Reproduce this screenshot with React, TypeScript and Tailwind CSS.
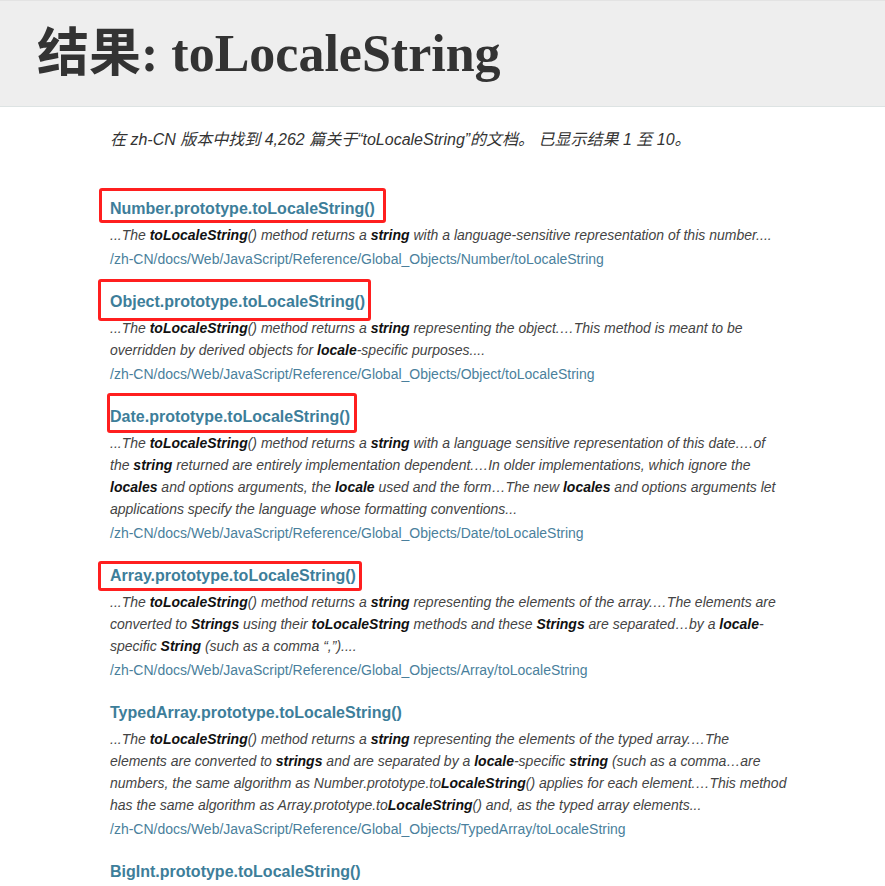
import React, { ReactElement } from "react";

type Result = {
  title: string;
  excerpt: string;
  url: string;
  box?: { left: number; top: number; width: number; height: number };
};

const RESULTS: Result[] = [
  {
    title: "Number.prototype.toLocaleString()",
    excerpt:
      "...The **toLocaleString**() method returns a **string** with a language-sensitive representation of this number....",
    url: "/zh-CN/docs/Web/JavaScript/Reference/Global_Objects/Number/toLocaleString",
    box: { left: -11, top: -9, width: 287, height: 35 },
  },
  {
    title: "Object.prototype.toLocaleString()",
    excerpt:
      "...The **toLocaleString**() method returns a **string** representing the object.\u2026This method is meant to be overridden by derived objects for **locale**-specific purposes....",
    url: "/zh-CN/docs/Web/JavaScript/Reference/Global_Objects/Object/toLocaleString",
    box: { left: -12, top: -11, width: 273, height: 42 },
  },
  {
    title: "Date.prototype.toLocaleString()",
    excerpt:
      "...The **toLocaleString**() method returns a **string** with a language sensitive representation of this date.\u2026of the **string** returned are entirely implementation dependent.\u2026In older implementations, which ignore the **locales** and options arguments, the **locale** used and the form\u2026The new **locales** and options arguments let applications specify the language whose formatting conventions...",
    url: "/zh-CN/docs/Web/JavaScript/Reference/Global_Objects/Date/toLocaleString",
    box: { left: -3, top: -12, width: 250, height: 40 },
  },
  {
    title: "Array.prototype.toLocaleString()",
    excerpt:
      "...The **toLocaleString**() method returns a **string** representing the elements of the array.\u2026The elements are converted to **Strings** using their **toLocaleString** methods and these **Strings** are separated\u2026by a **locale**-specific **String** (such as a comma \u201c,\u201d)....",
    url: "/zh-CN/docs/Web/JavaScript/Reference/Global_Objects/Array/toLocaleString",
    box: { left: -12, top: -3, width: 264, height: 30 },
  },
  {
    title: "TypedArray.prototype.toLocaleString()",
    excerpt:
      "...The **toLocaleString**() method returns a **string** representing the elements of the typed array.\u2026The elements are converted to **strings** and are separated by a **locale**-specific **string** (such as a comma\u2026are numbers, the same algorithm as Number.prototype.to**LocaleString**() applies for each element.\u2026This method has the same algorithm as Array.prototype.to**LocaleString**() and, as the typed array elements...",
    url: "/zh-CN/docs/Web/JavaScript/Reference/Global_Objects/TypedArray/toLocaleString",
  },
  {
    title: "BigInt.prototype.toLocaleString()",
    excerpt: "",
    url: "",
  },
];

function Excerpt({ text }: { text: string }): ReactElement {
  const parts = text.split("**");
  return (
    <p className="mt-[3px] text-[14px] leading-[22px] italic text-[#444]">
      {parts.map((p, i) =>
        i % 2 === 1 ? (
          <b key={i} className="font-bold text-[#111]">
            {p}
          </b>
        ) : (
          <React.Fragment key={i}>{p}</React.Fragment>
        )
      )}
    </p>
  );
}

function ResultItem({ result }: { result: Result }): ReactElement {
  return (
    <li className="mb-[20px]">
      <a href="#" className="relative inline-block text-[16px] leading-[24px] font-bold text-[#3d7e9a]">
        {result.title}
        {result.box ? (
          <span
            className="pointer-events-none absolute rounded-[3px] border-[3px] border-[#ff1f1f]"
            style={{
              left: result.box.left,
              top: result.box.top,
              width: result.box.width,
              height: result.box.height,
            }}
          />
        ) : null}
      </a>
      {result.excerpt ? <Excerpt text={result.excerpt} /> : null}
      {result.url ? (
        <div className="mt-[2px] text-[14px] leading-[22px] text-[#4a7f9c]">{result.url}</div>
      ) : null}
    </li>
  );
}

export default function App(): ReactElement {
  return (
    <div className="min-h-screen overflow-hidden bg-white font-['Liberation_Sans','Noto_Sans_CJK_SC',sans-serif]">
      <header className="flex h-[107px] items-center border-t border-b border-t-[#e3e3e3] border-b-[#dde3e3] bg-[#eeeeee] pl-[37px]">
        <h1 className="font-['Liberation_Serif','Noto_Sans_CJK_SC',serif] text-[52px] leading-[62px] font-bold text-[#333]">
          结果: toLocaleString
        </h1>
      </header>

      <main className="pl-[110px]">
        <p className="mt-[21px] text-[16px] leading-[24px] italic text-[#333]">
          在 zh-CN 版本中找到 4,262 篇关于“toLocaleString”的文档。 已显示结果 1 至 10。
        </p>

        <ul className="mt-[45px] w-[678px]">
          {RESULTS.map((r) => (
            <ResultItem key={r.title} result={r} />
          ))}
        </ul>
      </main>
    </div>
  );
}
